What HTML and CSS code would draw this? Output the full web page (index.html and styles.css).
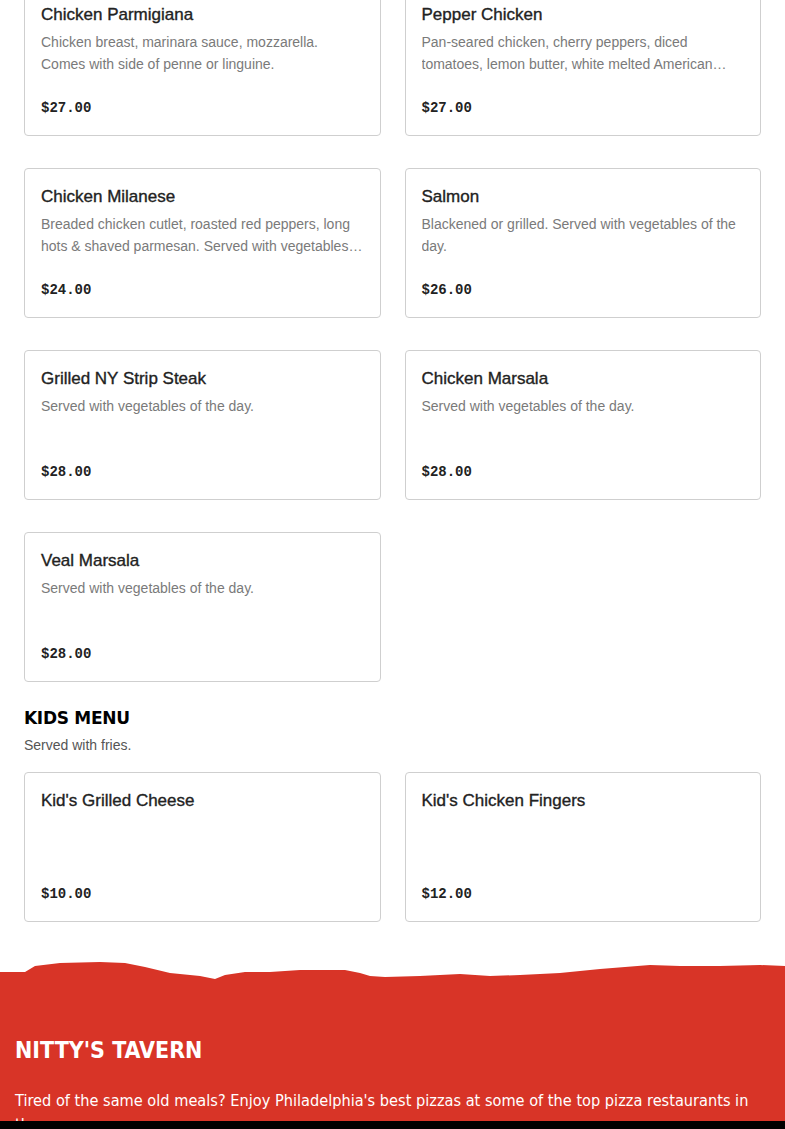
FILE: index.html
```html
<!DOCTYPE html>
<html lang="en">
<head>
<meta charset="utf-8">
<title>Nitty's Tavern Menu</title>
<link rel="stylesheet" href="styles.css">
</head>
<body>
<main class="menu">
  <div class="grid">
    <div class="card"><h3 class="name">Chicken Parmigiana</h3><p class="desc">Chicken breast, marinara sauce, mozzarella. Comes with side of penne or linguine.</p><div class="price">$27.00</div></div>
    <div class="card"><h3 class="name">Pepper Chicken</h3><p class="desc">Pan-seared chicken, cherry peppers, diced tomatoes, lemon butter, white melted American cheese. Served with vegetables of the day.</p><div class="price">$27.00</div></div>
    <div class="card"><h3 class="name">Chicken Milanese</h3><p class="desc">Breaded chicken cutlet, roasted red peppers, long hots &amp; shaved parmesan. Served with vegetables of the day.</p><div class="price">$24.00</div></div>
    <div class="card"><h3 class="name">Salmon</h3><p class="desc">Blackened or grilled. Served with vegetables of the day.</p><div class="price">$26.00</div></div>
    <div class="card"><h3 class="name">Grilled NY Strip Steak</h3><p class="desc">Served with vegetables of the day.</p><div class="price">$28.00</div></div>
    <div class="card"><h3 class="name">Chicken Marsala</h3><p class="desc">Served with vegetables of the day.</p><div class="price">$28.00</div></div>
    <div class="card"><h3 class="name">Veal Marsala</h3><p class="desc">Served with vegetables of the day.</p><div class="price">$28.00</div></div>
  </div>

  <section class="section">
    <h2 class="section-title">KIDS MENU</h2>
    <p class="section-note">Served with fries.</p>
    <div class="grid">
      <div class="card"><h3 class="name">Kid's Grilled Cheese</h3><p class="desc"></p><div class="price">$10.00</div></div>
      <div class="card"><h3 class="name">Kid's Chicken Fingers</h3><p class="desc"></p><div class="price">$12.00</div></div>
    </div>
  </section>
</main>

<footer class="footer">
  <svg class="edge" viewBox="0 0 785 30" preserveAspectRatio="none" aria-hidden="true">
    <path fill="#d83427" d="M0 17 L25 17 L35 11 L60 8 L100 7 L125 8 L145 12 L170 18 L200 21 L215 24 L225 20 L245 17 L270 17 L300 15 L345 15 L360 18 L370 21 L385 22 L420 21 L460 19 L490 21 L520 20 L560 18 L600 14 L650 10 L680 11 L720 11 L760 10 L785 11 L785 30 L0 30 Z"/>
  </svg>
  <div class="footer-body">
    <h2 class="brand">NITTY'S TAVERN</h2>
    <p class="blurb">Tired of the same old meals? Enjoy Philadelphia's best pizzas at some of the top pizza restaurants in the area.</p>
  </div>
</footer>
<div class="bottom-bar"></div>
</body>
</html>
```

FILE: styles.css
```css
* { box-sizing: border-box; }
html, body { margin: 0; padding: 0; background: #fff; }
body { font-family: "Liberation Sans", Arial, sans-serif; color: #222; }

.menu {
  padding: 0 24px;
  margin-top: -14px;
}

.grid {
  display: grid;
  grid-template-columns: 1fr 1fr;
  column-gap: 24px;
  row-gap: 32px;
}

.card {
  border: 1px solid #cfcfcf;
  border-radius: 4px;
  padding: 16px;
  height: 150px;
  display: flex;
  flex-direction: column;
}

.name {
  margin: 0;
  font-size: 17px;
  line-height: 24px;
  font-weight: normal;
  color: #222;
  -webkit-text-stroke: 0.35px #222;
}

.desc {
  margin: 4px 0 0;
  font-size: 14px;
  line-height: 22px;
  color: #7a7a7a;
  height: 44px;
  overflow: hidden;
  display: -webkit-box;
  -webkit-line-clamp: 2;
  -webkit-box-orient: vertical;
}

.price {
  margin-top: 23px;
  font-family: "Liberation Mono", "Courier New", monospace;
  font-weight: bold;
  font-size: 14px;
  line-height: 20px;
  color: #222;
}

.section { margin-top: 25px; }

.section-title {
  margin: 0;
  font-family: "DejaVu Sans", sans-serif;
  font-weight: bold;
  font-size: 17px;
  line-height: 22px;
  color: #000;
  letter-spacing: -0.3px;
}

.section-note {
  margin: 6px 0 17px;
  font-size: 14px;
  line-height: 20px;
  color: #555;
}

.footer { margin-top: 33px; }

.edge {
  display: block;
  width: 100%;
  height: 30px;
}

.footer-body {
  background: #d83427;
  color: #fff;
  padding: 51px 15px 20px;
}

.brand {
  margin: 0;
  font-family: "DejaVu Sans Condensed", "DejaVu Sans", sans-serif;
  font-weight: bold;
  font-size: 23px;
  line-height: 28px;
  letter-spacing: 0;
}

.blurb {
  margin: 25px 0 0;
  font-family: "DejaVu Sans Condensed", "DejaVu Sans", sans-serif;
  font-size: 16.2px;
  line-height: 24px;
}

.bottom-bar {
  position: fixed;
  left: 0;
  right: 0;
  bottom: 0;
  height: 8px;
  background: #000;
}
```
